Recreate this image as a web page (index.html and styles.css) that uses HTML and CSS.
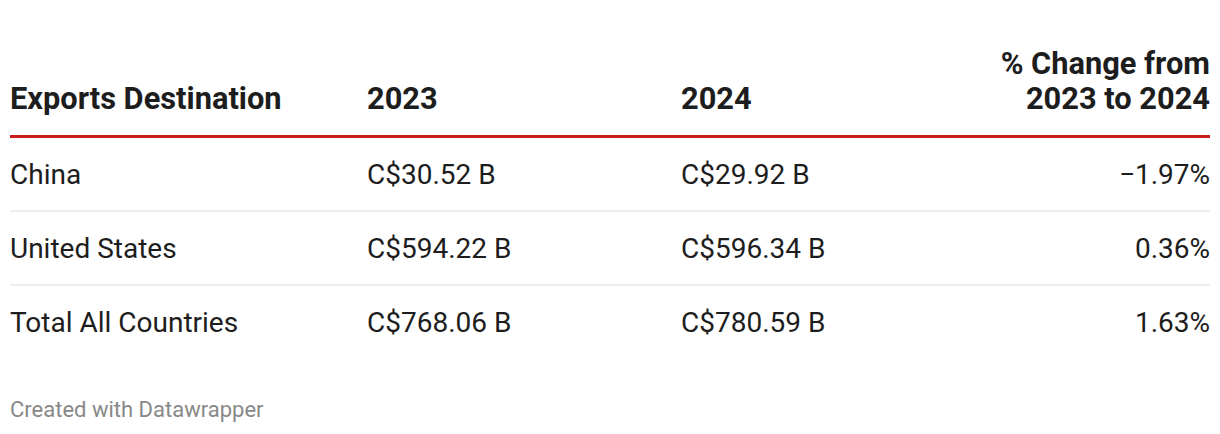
FILE: index.html
```html
<!DOCTYPE html>
<html>
<head>
<meta charset="utf-8">
<link rel="stylesheet" href="styles.css">
</head>
<body>
<div class="chart">
  <table class="tbl">
    <colgroup>
      <col class="c1"><col class="c2"><col class="c3"><col class="c4">
    </colgroup>
    <thead>
      <tr>
        <th>Exports Destination</th>
        <th>2023</th>
        <th>2024</th>
        <th class="num">% Change from<br>2023 to 2024</th>
      </tr>
    </thead>
    <tbody>
      <tr><td>China</td><td>C$30.52 B</td><td>C$29.92 B</td><td class="num">−1.97%</td></tr>
      <tr><td>United States</td><td>C$594.22 B</td><td>C$596.34 B</td><td class="num">0.36%</td></tr>
      <tr><td>Total All Countries</td><td>C$768.06 B</td><td>C$780.59 B</td><td class="num">1.63%</td></tr>
    </tbody>
  </table>
  <div class="footer">Created with Datawrapper</div>
</div>
</body>
</html>
```
FILE: styles.css
```css
html, body { margin: 0; padding: 0; background: #fff; }
body { font-family: Roboto, "Liberation Sans", sans-serif; color: #1d1d1d; }
.chart { padding: 46px 10px 0 10px; }
.tbl { width: 100%; border-collapse: collapse; table-layout: fixed; }
.c1 { width: 357px; }
.c2 { width: 314px; }
.c3 { width: auto; }
.c4 { width: 300px; }
.tbl th {
  font-weight: 700; font-size: 30.8px; line-height: 35px; text-align: left;
  vertical-align: bottom; padding: 0 0 19px 0;
  border-bottom: 3px solid #c71e1d;
}
.tbl td {
  font-size: 28px; line-height: 30px; padding: 22px 0 20px 0;
  border-bottom: 2px solid #eeeeee; vertical-align: middle;
}
.tbl tbody tr:last-child td { border-bottom: none; }
.tbl .num { text-align: right; }
.footer { margin-top: 40px; font-size: 22px; color: #888888; line-height: 24px; }
```
